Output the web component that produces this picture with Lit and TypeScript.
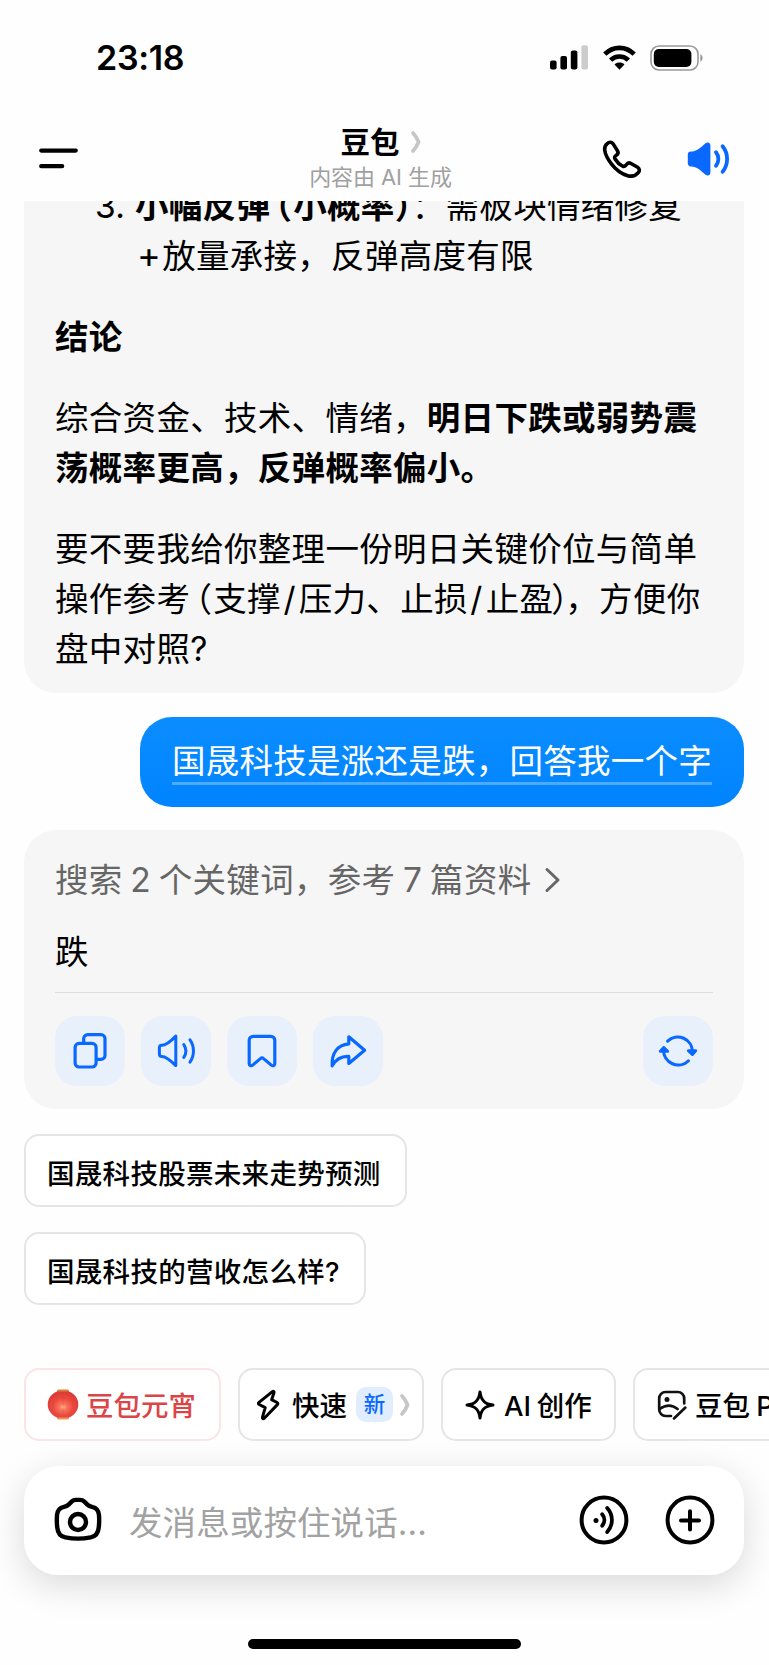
import { LitElement, html, css, svg } from "lit";
import { customElement, property } from "lit/decorators.js";

const icons: Record<string, { w: number; h: number; body: unknown }> = {
  signal: { w: 39, h: 25, body: svg`<g fill="#000"><rect x="0" y="15.5" width="6.6" height="9" rx="2"/><rect x="10.4" y="11" width="6.6" height="13.5" rx="2"/><rect x="20.8" y="5.5" width="6.6" height="19" rx="2"/><rect x="31.4" y="0.3" width="6.6" height="24.2" rx="2" fill="#ccc"/></g>` },
  wifi: { w: 33, h: 25, body: svg`<g fill="none" stroke="#000" stroke-width="4.6"><path d="M1.8 9.2C10 .7 23 .7 31.2 9.2"/><path d="M7.6 15.2c5-5 12.8-5 17.8 0"/></g><path d="M11.5 19.4c2.9-2.6 7.1-2.6 10 0l-5 5.3z" fill="#000"/>` },
  battery: { w: 54, h: 26, body: svg`<rect x="1" y="1" width="47" height="24" rx="8" fill="none" stroke="#999" stroke-width="1.6"/><rect x="3.8" y="4" width="37.6" height="18" rx="5" fill="#000"/><path d="M50.3 9.3c3 1.2 3 6.2 0 7.4z" fill="#999"/>` },
  menu: { w: 39, h: 21, body: svg`<path d="M2.2 2.6h34.6M2.2 18.2h21" fill="none" stroke="#000" stroke-width="4.2" stroke-linecap="round"/>` },
  softChevron: { w: 10, h: 22, body: svg`<path d="M2 2Q5 5 7.6 11 5 17 2 20" fill="none" stroke="#c6c6c6" stroke-width="3.8" stroke-linecap="round" stroke-linejoin="round"/>` },
  phone: { w: 40, h: 40, body: svg`<path d="M5.2 4.6C7 2.9 9.4 2.6 11 4.6L15.4 11.6C16.4 13.4 16.1 15 14.6 16 12.6 17.3 12.1 18.3 13.1 20 15 23.2 17.4 25.5 20.4 27 22.2 27.8 23.4 27.2 24.5 25.6 25.6 23.9 27.2 23.5 29 24.5L35.6 28.2C37.6 29.5 37.9 31.6 36.3 33.6 33.6 36.8 30 37.9 25.6 36.7 19.6 35 13.6 30.4 9.4 24.9 5.6 20 3.1 15 2.7 10.9 2.4 8 3.2 6.2 5.2 4.6Z" fill="none" stroke="#000" stroke-width="3.6" stroke-linejoin="round"/>` },
  speakerFill: { w: 44, h: 36, body: svg`<path d="M4 10.6C10 10.400 13.500 6.600 18.600 2.200 20.600.600 23.400 1.400 23.400 4.400v27.200c0 3-2.800 3.800-4.800 2.200C13.500 29.400 10 25.600 4 25.400c-2 0-3.200-1.200-3.200-3.200v-8.400c0-2 1.200-3.200 3.200-3.200z" fill="#0968ff"/><path d="M29 11.2c3.2 4 3.2 9.600 0 13.600M35.600 5.200c6 7.400 6 18.200 0 25.600" fill="none" stroke="#0968ff" stroke-width="3.800" stroke-linecap="round"/>` },
  chevron: { w: 15, h: 24, body: svg`<path d="M2 1.5 13 12 2 22.5" fill="none" stroke="#666" stroke-width="3" stroke-linecap="round" stroke-linejoin="round"/>` },
  copy: { w: 36, h: 36, body: svg`<g fill="none" stroke="#0968ff" stroke-width="3.2" stroke-linejoin="round"><rect x="3.1" y="10.4" width="21" height="23.6" rx="4"/><path d="M11.7 10V5.6a4 4 0 0 1 4-4H29a4 4 0 0 1 4 4v16.8a4 4 0 0 1-4 4h-4.4"/></g>` },
  speaker: { w: 38, h: 34, body: svg`<g fill="none" stroke="#0968ff" stroke-width="3" stroke-linecap="round" stroke-linejoin="round"><path d="M4.8 11.3c3.8 0 8.5-3.5 14-9.2V31.6C13.3 26 8.6 22.4 4.8 22.4 3 22.4 2.4 21.6 2.4 20.2v-6.6c0-1.6.8-2.3 2.4-2.3z"/><path d="M26.8 10.6c2.6 3.9 2.6 8.9 0 12.8M33 5.8c4.6 6.6 4.6 15.8 0 22.4"/></g>` },
  bookmark: { w: 30, h: 34, body: svg`<path d="M6.2 2.3h17.6a4 4 0 0 1 4 4V29.6c0 2-2 2.8-3.5 1.5L16.6 24.6a2.4 2.4 0 0 0-3.2 0L5.7 31.1c-1.5 1.3-3.5.5-3.5-1.5V6.3a4 4 0 0 1 4-4z" fill="none" stroke="#0968ff" stroke-width="3.2" stroke-linejoin="round"/>` },
  share: { w: 38, h: 34, body: svg`<path d="M19.8 2.8 35.6 16.2 19.8 29.4V22.4C12.6 22 7 25 3.2 31.8 2.4 19 8.6 10.8 19.8 9.8Z" fill="none" stroke="#0968ff" stroke-width="3.2" stroke-linejoin="round"/>` },
  refresh: { w: 40, h: 34, body: svg`<g fill="none" stroke="#0968ff" stroke-width="3.1" stroke-linecap="round" stroke-linejoin="round"><path d="M9.6 7.2A14.6 14.6 0 0 1 34.4 18"/><path d="M30.4 16.7 34.4 20.4 37.6 16.7z" fill="#0968ff"/><path d="M30.4 26.8A14.6 14.6 0 0 1 5.6 16"/><path d="M2.4 17.3 5.8 13.6 9.6 17.3z" fill="#0968ff"/></g>` },
  bolt: { w: 24, h: 32, body: svg`<path d="M16.4 2.6 3 13.4c-.8.7-.7 1.6.2 2.1l6 3.1-2.7 9.6c-.4 1.5.8 2 1.8 1L21.4 15.6c.7-.8.6-1.6-.3-2.1l-5.5-2.8L18 3.8c.4-1.4-.5-2.1-1.6-1.2z" fill="none" stroke="#000" stroke-width="3" stroke-linejoin="round"/>` },
  star: { w: 30, h: 30, body: svg`<path d="M15 2C15.9 10.3 19.7 14.1 28 15 19.7 15.9 15.9 19.7 15 28 14.1 19.7 10.3 15.9 2 15 10.3 14.1 14.1 10.3 15 2Z" fill="none" stroke="#000" stroke-width="3" stroke-linejoin="round"/>` },
  photo: { w: 30, h: 30, body: svg`<g fill="none" stroke="#111" stroke-width="2.7" stroke-linecap="round" stroke-linejoin="round"><path d="M14 26H8.6A6.4 6.4 0 0 1 2.2 19.6V8.4A6.4 6.4 0 0 1 8.6 2h12.2a6.4 6.4 0 0 1 6.4 6.4v5"/><path d="M2.6 19C9 14.4 14.6 14 20.6 19"/><path d="M28.4 17.6 17 28.4"/></g><circle cx="10" cy="9.4" r="2.5" fill="#111"/>` },
  camera: { w: 48, h: 46, body: svg`<g fill="none" stroke="#000" stroke-width="4.4" stroke-linejoin="round"><path d="M17.6 4.6C19 3.2 20.4 2.9 22 2.9h4c1.8 0 3 .4 4.4 1.7l3 3c1.5 1.5 2.7 1.9 4.6 2.3 4.6 1 6.7 3.3 7 8.3.3 4 .2 8.4-.3 12.6-.5 5.3-3 8.7-8 9.5C29 41.9 19 41.9 11.3 40.3c-5-.8-7.5-4.2-8-9.5-.5-4.2-.6-8.6-.3-12.6.3-5 2.4-7.3 7-8.3 1.9-.4 3.1-.8 4.6-2.300z"/><circle cx="24" cy="25" r="8"/></g>` },
  voice: { w: 50, h: 50, body: svg`<g fill="none" stroke="#000" stroke-width="4" stroke-linecap="round"><circle cx="25" cy="25" r="22.4"/><path d="M23.2 19.3c2.9 3.5 2.9 7.9 0 11.4" stroke-width="3.8"/><path d="M28.2 13c6.3 7.2 6.3 16.8 0 24" stroke-width="3.8"/></g><circle cx="17" cy="25.4" r="2.5"/>` },
  plus: { w: 50, h: 50, body: svg`<g fill="none" stroke="#000" stroke-width="4" stroke-linecap="round"><circle cx="25" cy="25" r="22.4"/><path d="M25 16.2v18.4M16 25.4h18"/></g>` },
  lantern: { w: 32, h: 31, body: svg`<defs><radialGradient id="glow" cx=".5" cy=".6" r=".55"><stop offset="0" stop-color="#ffc090"/><stop offset=".2" stop-color="#f9785c"/><stop offset=".6" stop-color="#ec4a40"/><stop offset="1" stop-color="#dd3c36"/></radialGradient></defs><rect x="10" y=".5" width="12" height="4" rx="1.5" fill="#d4803f"/><rect x="10" y="26.500" width="12" height="4" rx="1.500" fill="#e8985a"/><path d="M10 2.600h12C28 5 31.300 10 31.300 15.500S28 26 22 28.400H10C4 26 .7 21 .7 15.500S4 5 10 2.600z" fill="url(#glow)"/><path d="M11 4.500C4.500 9 4.500 22 11 26.500M21 4.500c6.500 4.500 6.500 17.500 0 22M16 3v25" fill="none" stroke="#d8403a" stroke-opacity=".3"/>` },
};

@customElement("ui-icon")
class UiIcon extends LitElement {
  @property() name = "";
  static styles = css`
    :host { display: block; flex: none; line-height: 0; }
    svg { display: block; overflow: visible; }
  `;
  render() {
    const i = icons[this.name];
    return html`<svg width=${i.w} height=${i.h} viewBox="0 0 ${i.w} ${i.h}">${i.body}</svg>`;
  }
}

@customElement("app-root")
class AppRoot extends LitElement {
  static styles = css`
    :host {
      display: flex; flex-direction: column; box-sizing: border-box;
      width: 769px; height: 1665px; overflow: hidden; background: #fefefe; color: #000;
      font-family: Inter, "Noto Sans CJK SC", sans-serif;
    }
    * { box-sizing: border-box; }
    p { margin: 0; }
    .status { display: flex; align-items: center; height: 115px; padding: 0 65px 0 96px; flex: none; }
    .time { flex: 1; font-size: 34px; font-weight: 600; letter-spacing: -0.3px; }
    .status ui-icon + ui-icon { margin-left: 14px; }
    .header { display: grid; grid-template-columns: 1fr auto 1fr; height: 86px; padding: 0 38px 0 39px; flex: none; align-items: center; }
    .menu { margin-top: 1px; }
    .title { display: flex; flex-direction: column; align-items: center; margin-right: 9px; }
    .name { display: flex; align-items: center; font-size: 29.5px; font-weight: 600; line-height: 38px; gap: 11px; margin-top: -1px; }
    .sub { font-size: 22px; line-height: 32px; color: #a0a0a0; font-weight: 400; letter-spacing: -.1px; }
    .actions { display: flex; justify-content: flex-end; align-items: center; gap: 45px; margin-top: 2px; }
    .chat { flex: none; height: 1167px; overflow: hidden; display: flex; flex-direction: column; justify-content: flex-end; padding: 0 25px 63px 24px; }
    .card { background: #f6f6f6; border-radius: 32px; padding: 25px 31px 19px; font-size: 33.5px; letter-spacing: .3px; line-height: 50px; flex: none; }
    .card p + p { margin-top: 31px; }
    .item { display: flex; margin-bottom: 31px; }
    .num { width: 80px; padding-left: 40px; flex: none; }
    .open { font-feature-settings: "halt"; margin-left: 5px; margin-right: 1px; }
    .close { font-feature-settings: "halt"; }
    p .close { margin-left: -2px; margin-right: -3px; }
    .slash { margin: 0 3px 0 2.5px; }
    .add { margin: 0 1px 0 2px; font-size: 36px; line-height: 1; }
    .bubble { align-self: flex-end; margin: 23.5px 0; height: 90px; border-radius: 32px; padding: 21px 32px 0 32px; color: #fff;
      background: linear-gradient(#0b8dff, #0084ff); font-size: 33.5px; letter-spacing: .25px; line-height: 46px; flex: none; }
    .bubble span { display: block; height: 47px; border-bottom: 3px solid #4dacff; white-space: nowrap; }
    .answer { padding-bottom: 23px; }
    .refs { display: flex; align-items: center; gap: 14px; color: #666; word-spacing: -2px; }
    .result { margin-top: 22px; padding-bottom: 15px; border-bottom: 1px solid #dedede; }
    .tools { display: flex; gap: 16px; margin-top: 23px; }
    .tool { width: 70px; height: 70px; border-radius: 22px; background: #e8f0fb; display: grid; place-items: center; }
    .tool:last-child { margin-left: auto; }
    .suggest { display: flex; flex-direction: column; align-items: flex-start; gap: 25px; margin-top: 25px; flex: none; }
    .chip { height: 73px; border: 2px solid #e5e5e5; border-radius: 15px; background: #fff; display: flex; align-items: center; flex: none;
      font-size: 27.5px; letter-spacing: .3px; font-weight: 500; white-space: nowrap; }
    .suggest .chip { padding: 2px 24px 0 21px; }
    .bar { display: flex; gap: 17px; height: 73px; padding-left: 24px; flex: none; }
    .bar .chip { padding-bottom: 2px; letter-spacing: 0; }
    .bar ui-icon { margin-top: 2px; }
    .fest { width: 197px; padding-left: 21px; gap: 7px; border-color: #fbe3e6; color: #dc4548; }
    .fast { width: 186px; padding-left: 16px; }
    .fast .label { margin-left: 12px; }
    .badge { margin: 2px 7px 0 9px; width: 37px; height: 35px; border-radius: 10px; background: #dfedfe; color: #0968ff; font-size: 21.5px; line-height: 35px; display: grid; place-items: center; }
    .create { width: 175px; padding-left: 22px; gap: 9px; word-spacing: -1.5px; }
    .draw { width: 175px; padding-left: 22px; gap: 8px; word-spacing: -1px; }
    .input { margin: 25px 25px 0 24px; height: 109px; border-radius: 34px; background: #fff; box-shadow: 0 10px 36px rgba(0,0,0,.15); display: flex; align-items: center; padding: 0 29px 1px 30px; flex: none; }
    .hint { flex: 1; margin: 1px 0 0 27px; font-size: 33.5px; letter-spacing: .1px; color: #a2a2a2; }
    .plus { margin-left: 36px; }
    .home { width: 273px; height: 10px; border-radius: 5px; background: #000; margin: 64px 0 0 248px; flex: none; }
  `;

  render() {
    return html`
      <div class="status">
        <span class="time">23:18</span>
        <ui-icon name="signal"></ui-icon><ui-icon name="wifi"></ui-icon><ui-icon name="battery"></ui-icon>
      </div>
      <div class="header">
        <ui-icon class="menu" name="menu"></ui-icon>
        <div class="title">
          <div class="name">豆包<ui-icon name="softChevron"></ui-icon></div>
          <div class="sub">内容由 AI 生成</div>
        </div>
        <div class="actions"><ui-icon name="phone"></ui-icon><ui-icon name="speakerFill"></ui-icon></div>
      </div>
      <div class="chat">
        <div class="card">
          <div class="item">
            <span class="num">3.</span>
            <div><b>小幅反弹<span class="open">（</span>小概率<span class="close">）</span></b>：需板块情绪修复<br /><span class="add">+</span>放量承接，反弹高度有限</div>
          </div>
          <p><b>结论</b></p>
          <p>综合资金、技术、情绪，<b>明日下跌或弱势震<br />荡概率更高，反弹概率偏小。</b></p>
          <p>要不要我给你整理一份明日关键价位与简单<br />操作参考<span class="open">（</span>支撑<span class="slash">/</span>压力、止损<span class="slash">/</span>止盈<span class="close">）</span>，方便你<br />盘中对照?</p>
        </div>
        <div class="bubble"><span>国晟科技是涨还是跌，回答我一个字</span></div>
        <div class="card answer">
          <div class="refs">搜索 2 个关键词，参考 7 篇资料<ui-icon name="chevron"></ui-icon></div>
          <div class="result">跌</div>
          <div class="tools">
            ${["copy", "speaker", "bookmark", "share", "refresh"].map((n) => html`<div class="tool"><ui-icon name=${n}></ui-icon></div>`)}
          </div>
        </div>
        <div class="suggest">
          <div class="chip">国晟科技股票未来走势预测</div>
          <div class="chip">国晟科技的营收怎么样?</div>
        </div>
      </div>
      <div class="bar">
        <div class="chip fest"><ui-icon name="lantern"></ui-icon>豆包元宵</div>
        <div class="chip fast"><ui-icon name="bolt"></ui-icon><span class="label">快速</span><span class="badge">新</span><ui-icon name="softChevron"></ui-icon></div>
        <div class="chip create"><ui-icon name="star"></ui-icon>AI 创作</div>
        <div class="chip draw"><ui-icon name="photo"></ui-icon>豆包 P 图</div>
      </div>
      <div class="input">
        <ui-icon name="camera"></ui-icon>
        <span class="hint">发消息或按住说话...</span>
        <ui-icon name="voice"></ui-icon><ui-icon class="plus" name="plus"></ui-icon>
      </div>
      <div class="home"></div>
    `;
  }
}
